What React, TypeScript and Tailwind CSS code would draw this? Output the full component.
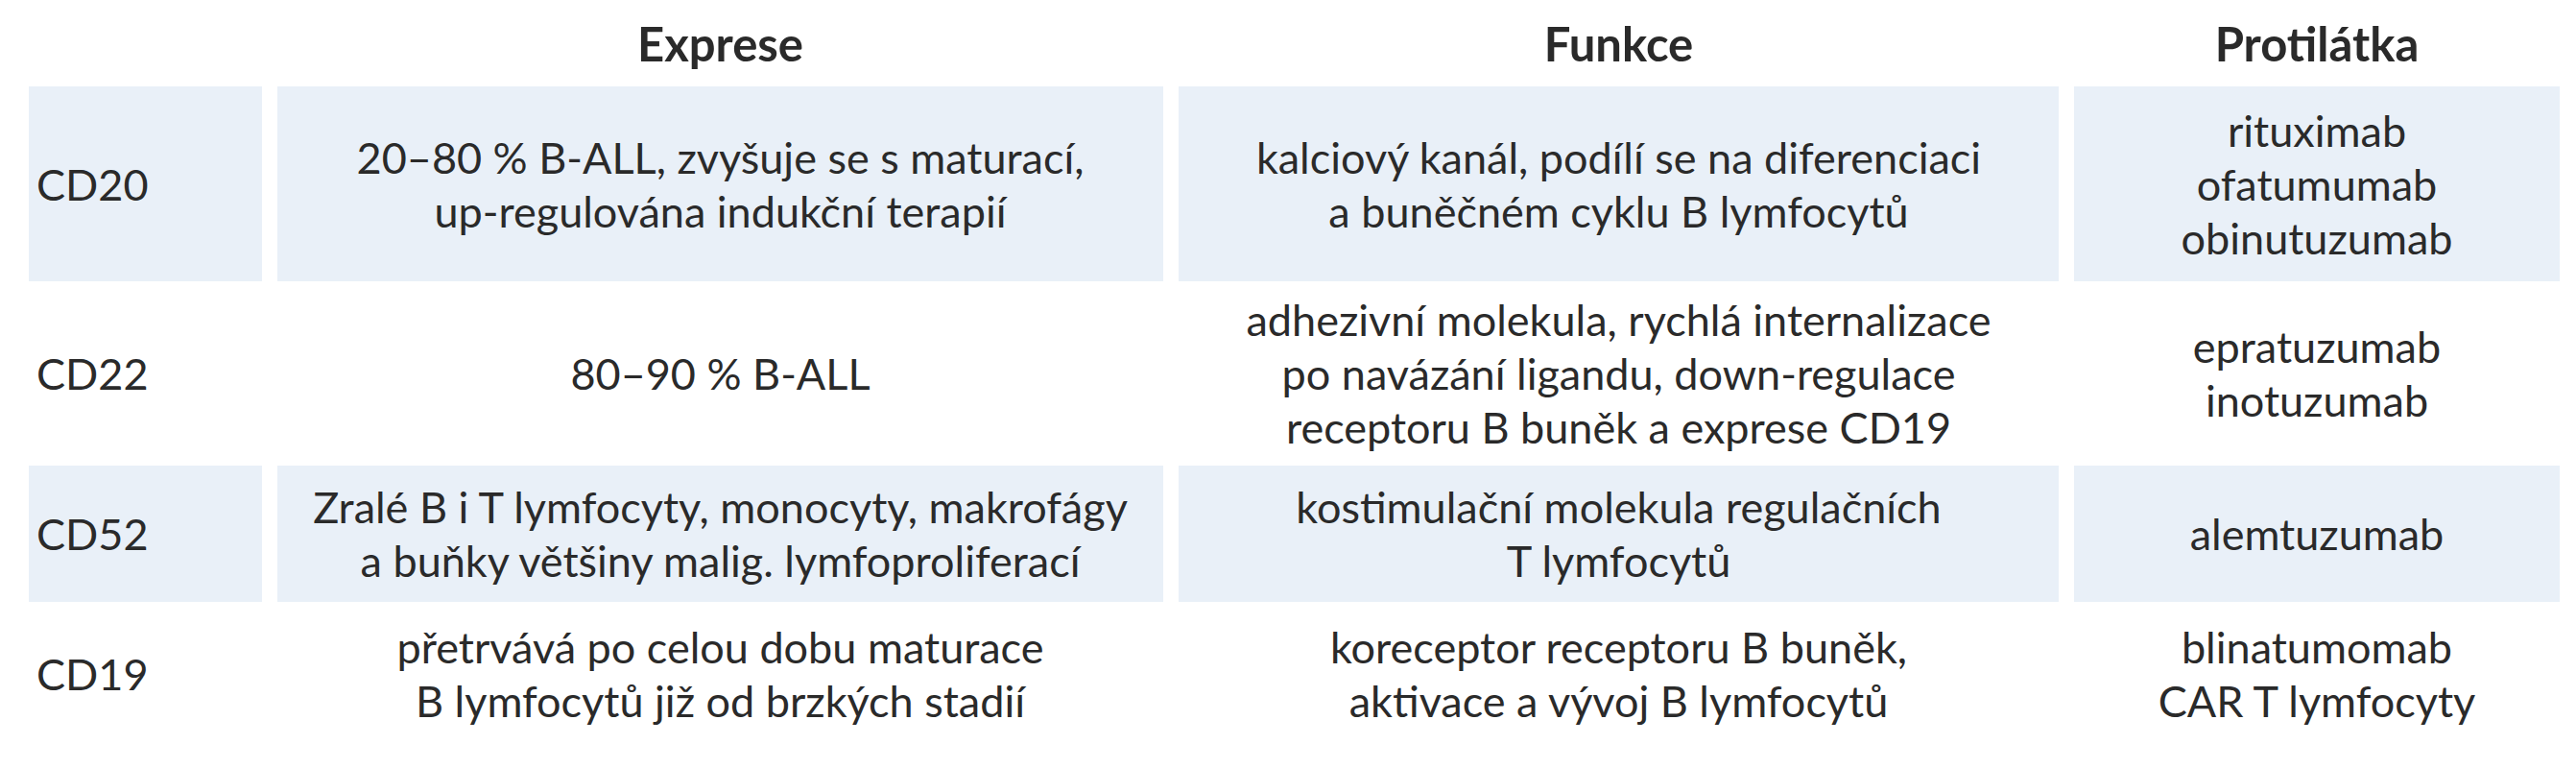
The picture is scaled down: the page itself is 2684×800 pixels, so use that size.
const rows = [
  {
    id: "CD20",
    shaded: true,
    h: "h-[203px]",
    expr: ["20–80 % B-ALL, zvyšuje se s maturací,", "up-regulována indukční terapií"],
    func: ["kalciový kanál, podílí se na diferenciaci", "a buněčném cyklu B lymfocytů"],
    ab: ["rituximab", "ofatumumab", "obinutuzumab"],
  },
  {
    id: "CD22",
    shaded: false,
    h: "h-[192px]",
    expr: ["80–90 % B-ALL"],
    func: [
      "adhezivní molekula, rychlá internalizace",
      "po navázání ligandu, down-regulace",
      "receptoru B buněk a exprese CD19",
    ],
    ab: ["epratuzumab", "inotuzumab"],
  },
  {
    id: "CD52",
    shaded: true,
    h: "h-[142px]",
    expr: ["Zralé B i T lymfocyty, monocyty, makrofágy", "a buňky většiny malig. lymfoproliferací"],
    func: ["kostimulační molekula regulačních", "T lymfocytů"],
    ab: ["alemtuzumab"],
  },
  {
    id: "CD19",
    shaded: false,
    h: "h-[150px]",
    expr: ["přetrvává po celou dobu maturace", "B lymfocytů již od brzkých stadií"],
    func: ["koreceptor receptoru B buněk,", "aktivace a vývoj B lymfocytů"],
    ab: ["blinatumomab", "CAR T lymfocyty"],
  },
];

function Lines({ lines }: { lines: string[] }) {
  return (
    <div className="flex flex-col">
      {lines.map((l) => (
        <span key={l}>{l}</span>
      ))}
    </div>
  );
}

export default function App() {
  return (
    <div className="w-[2684px] h-[800px] bg-white text-[#2a2a2a] font-['Lato',sans-serif] text-[45px] leading-[56px]">
      <div className="grid grid-cols-[243px_923px_917px_506px] gap-x-[16px] px-[30px]">
        {/* header */}
        <div className="h-[90px]" />
        <div className="h-[90px] flex items-center justify-center font-bold text-[49px]">Exprese</div>
        <div className="h-[90px] flex items-center justify-center font-bold text-[49px]">Funkce</div>
        <div className="h-[90px] flex items-center justify-center font-bold text-[49px]">Protilátka</div>

        {rows.map((r) => {
          const bg = r.shaded ? "bg-[#e9f0f8]" : "bg-white";
          return [
            <div key={r.id + "a"} className={`${r.h} ${bg} flex items-center pl-[8px]`}>
              {r.id}
            </div>,
            <div key={r.id + "b"} className={`${r.h} ${bg} flex items-center justify-center text-center`}>
              <Lines lines={r.expr} />
            </div>,
            <div key={r.id + "c"} className={`${r.h} ${bg} flex items-center justify-center text-center`}>
              <Lines lines={r.func} />
            </div>,
            <div key={r.id + "d"} className={`${r.h} ${bg} flex items-center justify-center text-center`}>
              <Lines lines={r.ab} />
            </div>,
          ];
        })}
      </div>
    </div>
  );
}
